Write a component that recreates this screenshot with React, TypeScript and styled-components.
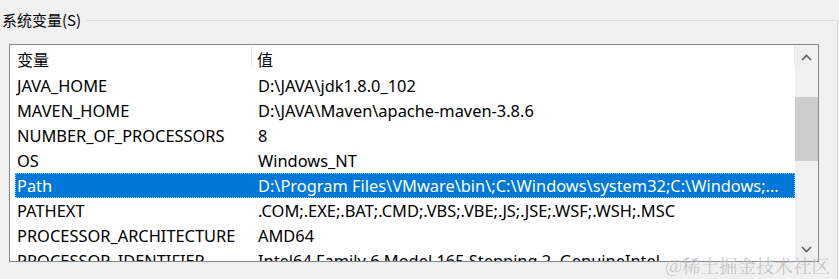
import React from "react";
import styled, { createGlobalStyle } from "styled-components";

const Global = createGlobalStyle`
  html, body { margin: 0; padding: 0; background: #f0f0f0; }
  body { font-family: "Noto Sans", "Noto Sans CJK SC", sans-serif; }
`;

const Page = styled.div`
  position: relative;
  width: 839px;
  height: 279px;
  overflow: hidden;
  background: #f0f0f0;
  font-family: "Noto Sans", "Noto Sans CJK SC", sans-serif;
  font-size: 15px;
  color: #000;
`;

const Group = styled.fieldset`
  margin: 10px 0 0 0;
  padding: 0 0 0 9px;
  width: 838px;
  height: 300px;
  box-sizing: border-box;
  border: 1px solid #dcdcdc;
  border-left: none;
  border-bottom: none;
`;

const Legend = styled.legend`
  padding: 0 5px 0 2px;
  margin-left: -9px;
  line-height: 20px;
  font-size: 15px;
  font-family: "Noto Sans CJK SC", "Noto Sans", sans-serif;
`;

const ListBox = styled.div`
  margin-top: 14px;
  width: 810px;
  height: 218px;
  box-sizing: border-box;
  border: 1px solid #828790;
  background: #fff;
  display: flex;
`;

const ListArea = styled.div`
  flex: 1;
  display: flex;
  flex-direction: column;
  overflow: hidden;
`;

const HeaderRow = styled.div`
  height: 28px;
  flex: none;
  display: flex;
  align-items: stretch;
`;

const HeaderCell = styled.div<{ $w?: number }>`
  ${(p) => (p.$w ? `width: ${p.$w}px; flex: none;` : "flex: 1;")}
  display: flex;
  align-items: center;
  padding-left: ${(p) => (p.$w ? 7 : 5)}px;
  box-sizing: border-box;
  border-right: 1px solid #e5e5e5;
  margin: 1px 0 8px;
  padding-top: 6px;
  font-family: "Noto Sans CJK SC", sans-serif;
  font-size: 16px;
`;

const Row = styled.div<{ $selected?: boolean }>`
  flex: none;
  height: 25px;
  margin-left: 5px;
  display: flex;
  align-items: center;
  box-sizing: border-box;
  white-space: nowrap;
  font-size: 16.4px;
  background: ${(p) => (p.$selected ? "#0078d7" : "transparent")};
  color: ${(p) => (p.$selected ? "#fff" : "#000")};
  border: 1px dotted ${(p) => (p.$selected ? "#9ec9ef" : "transparent")};
`;

const NameCell = styled.div`
  width: 237px;
  flex: none;
  padding-left: 1px;
  box-sizing: border-box;
  overflow: hidden;
`;

const ValueCell = styled.div`
  flex: 1;
  padding-left: 5px;
  overflow: hidden;
`;

const ScrollBar = styled.div`
  width: 23px;
  flex: none;
  background: #f0f0f0;
  display: flex;
  flex-direction: column;
  align-items: stretch;
`;

const ArrowBtn = styled.div`
  height: 24px;
  display: flex;
  align-items: center;
  justify-content: center;
`;

const Track = styled.div`
  flex: 1;
  padding-top: 28px;
`;

const Thumb = styled.div`
  height: 64px;
  background: #cdcdcd;
`;

const Watermark = styled.div`
  position: absolute;
  right: 9px;
  bottom: 1px;
  font-family: "Noto Serif CJK SC", "Noto Sans CJK SC", serif;
  font-size: 18.5px;
  color: rgba(150, 150, 150, 0.55);
  text-shadow: 0 0 1px rgba(255, 255, 255, 0.6);
`;

const rows: [string, string][] = [
  ["JAVA_HOME", "D:\\JAVA\\jdk1.8.0_102"],
  ["MAVEN_HOME", "D:\\JAVA\\Maven\\apache-maven-3.8.6"],
  ["NUMBER_OF_PROCESSORS", "8"],
  ["OS", "Windows_NT"],
  ["Path", "D:\\Program Files\\VMware\\bin\\;C:\\Windows\\system32;C:\\Windows;..."],
  ["PATHEXT", ".COM;.EXE;.BAT;.CMD;.VBS;.VBE;.JS;.JSE;.WSF;.WSH;.MSC"],
  ["PROCESSOR_ARCHITECTURE", "AMD64"],
  ["PROCESSOR_IDENTIFIER", "Intel64 Family 6 Model 165 Stepping 2, GenuineIntel"],
];

const Chevron = ({ up }: { up?: boolean }) => (
  <svg width="11" height="7" viewBox="0 0 11 7">
    <path
      d={up ? "M1 6 L5.5 1.5 L10 6" : "M1 1 L5.5 5.5 L10 1"}
      fill="none"
      stroke="#606060"
      strokeWidth="1.6"
    />
  </svg>
);

export default function App() {
  return (
    <>
      <Global />
      <Page>
        <Group>
          <Legend>系统变量(S)</Legend>
          <ListBox>
            <ListArea>
              <HeaderRow>
                <HeaderCell $w={242}>变量</HeaderCell>
                <HeaderCell>值</HeaderCell>
              </HeaderRow>
              {rows.map(([n, v]) => (
                <Row key={n} $selected={n === "Path"}>
                  <NameCell>{n}</NameCell>
                  <ValueCell>{v}</ValueCell>
                </Row>
              ))}
            </ListArea>
            <ScrollBar>
              <ArrowBtn>
                <Chevron up />
              </ArrowBtn>
              <Track>
                <Thumb />
              </Track>
              <ArrowBtn>
                <Chevron />
              </ArrowBtn>
            </ScrollBar>
          </ListBox>
        </Group>
        <Watermark>@稀土掘金技术社区</Watermark>
      </Page>
    </>
  );
}
